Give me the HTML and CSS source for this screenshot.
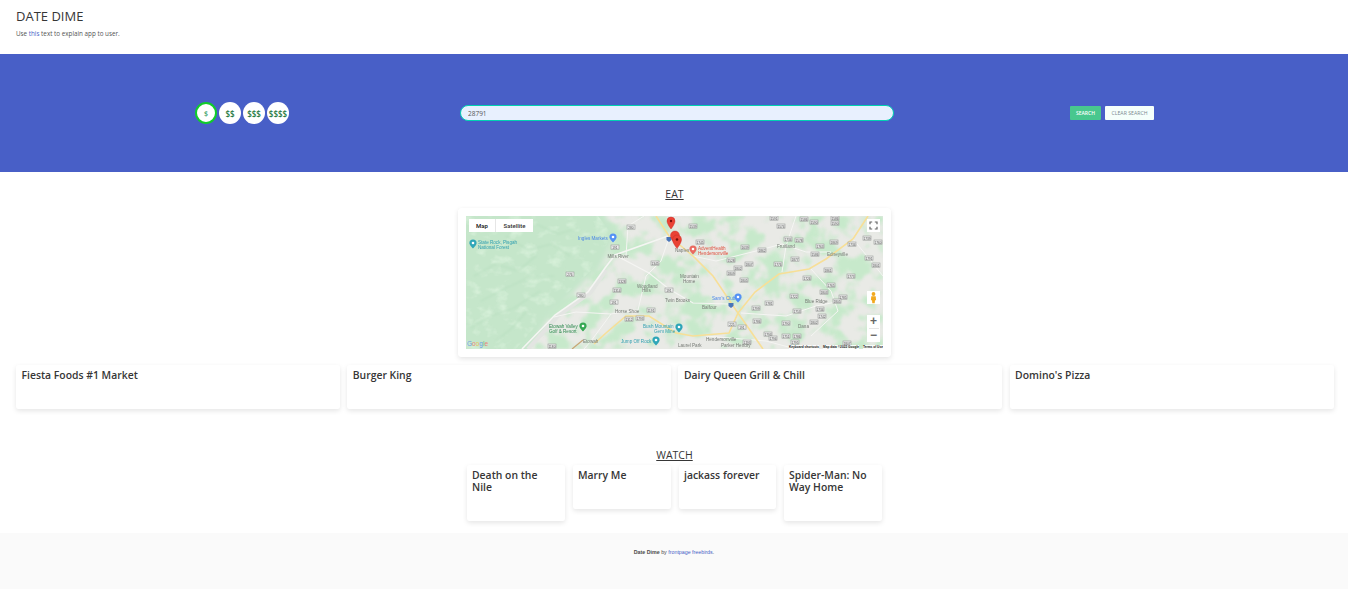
FILE: index.html
```html
<!DOCTYPE html>
<html lang="en">
<head>
  <meta charset="UTF-8">
  <title>Date Dime</title>
  <link rel="stylesheet" href="styles.css">
</head>
<body>

  <header class="top">
    <h1>DATE DIME</h1>
    <p>Use <a href="#">this</a> text to explain app to user.</p>
  </header>

  <section class="banner">
    <div class="prices">
      <button class="price active">$</button>
      <button class="price">$$</button>
      <button class="price">$$$</button>
      <button class="price">$$$$</button>
    </div>
    <input class="zip" type="text" value="28791">
    <div class="actions">
      <button class="btn-search">SEARCH</button>
      <button class="btn-clear">CLEAR SEARCH</button>
    </div>
  </section>

  <h2 class="section-title eat-title">EAT</h2>

  <div class="map-card">
    <div class="map">
      <svg class="map-base" viewBox="0 0 417 133" width="417" height="133">
        <defs>
          <filter id="mottle" x="0" y="0" width="100%" height="100%" color-interpolation-filters="sRGB">
            <feTurbulence type="fractalNoise" baseFrequency=".05" numOctaves="3" seed="11"/>
            <feColorMatrix values="0 0 0 0 .78  0 0 0 0 .915  0 0 0 0 .795  6 0 0 0 -2.700"/>
            <feGaussianBlur stdDeviation=".8"/>
          </filter>
          <filter id="terrain" x="0" y="0" width="100%" height="100%" color-interpolation-filters="sRGB">
            <feTurbulence type="fractalNoise" baseFrequency=".07 .1" numOctaves="3" seed="4"/>
            <feColorMatrix values="0 0 0 0 .84  0 0 0 0 .94  0 0 0 0 .85  3 0 0 0 -1.500"/>
            <feGaussianBlur stdDeviation=".6"/>
            <feComposite in2="SourceAlpha" operator="in"/>
          </filter>
          <filter id="wide" x="-20%" y="-20%" width="140%" height="140%"><feGaussianBlur stdDeviation="2.500"/></filter>
          <filter id="ridge"><feGaussianBlur stdDeviation="1"/></filter>
          <filter id="lens" x="0" y="0" width="100%" height="100%"><feGaussianBlur stdDeviation=".42"/></filter>
          <rect id="s" width="8" height="4.200" fill="#ecedec" stroke="#9a9c9a" stroke-width=".6"/>
        </defs>
        <g filter="url(#lens)">
        <rect width="417" height="133" fill="#e9eae6"/>
        <!-- patchy woodland over the valley -->
        <rect width="417" height="133" fill="#000" filter="url(#mottle)"/>
        <!-- forest -->
        <path fill="#c5e6ca" filter="url(#wide)" d="M-8-8H135L150 18 135 50 122 62 104 80 84 100 56 142H-8Z"/>
        <path fill="#000" filter="url(#terrain)" d="M0 0H132L146 18 130 50 100 78 78 100 50 133H0Z"/>
        <!-- forest ridges -->
        <g fill="none" stroke-linecap="round" filter="url(#ridge)">
          <g stroke="#b9dfc0" stroke-width="1.200">
            <path d="M8 60L30 48 52 55 70 40M15 85L40 72 62 62 88 60M5 112L25 100 48 92 74 75"/>
            <path d="M40 20L62 34 86 28 104 40M70 8L92 18 112 12M30 125L46 112 60 96"/>
          </g>
        </g>
        <!-- white roads -->
        <g fill="none" stroke="#f5f5f3">
          <path stroke="#e3e5e2" stroke-width="4" d="M62 133L92 100 125 76 140 54"/>
          <path stroke-width="1.600" d="M56 133L89 99 122 76 139 52 149 39 202 20"/>
          <path stroke-width="1.200" d="M149 39L183 57 203 73 227 87 262 88"/>
          <path stroke-width="1" d="M88 101L110 96 145 98 172 94M145 98L125 125 118 133"/>
          <path stroke-width="1" d="M172 94L180 60 195 45 203 22M160 40L162 10 178 0"/>
          <path stroke-width="1" d="M275 97L320 100 350 90 375 85M240 120L300 125 330 133"/>
          <path stroke-width="1" d="M227 40L250 45 290 35 316 28 340 36 365 36M316 56L320 30 330 0"/>
          <path stroke-width="1" d="M345 53L365 75 372 95 345 120M387 23L405 45 417 60"/>
        </g>
        <!-- main roads -->
        <g fill="none" stroke="#f7df97" stroke-width="1.600">
          <path d="M402 0L387 23 360 43 343 53 313 58 289 76 272 97 297 133"/>
          <path d="M190 0L203 20 227 40 247 60 272 97 263 117 227 120 210 117 183 100 160 100 140 117 128 128"/>
          <path stroke="#c7a674" stroke-width="1.200" d="M106 133L117 124"/>
        </g>
        <!-- route shields -->
        <g>
          <use href="#s" x="161" y="9"/><use href="#s" x="145" y="29"/><use href="#s" x="185" y="45"/><use href="#s" x="100" y="56"/><use href="#s" x="111" y="77"/>
          <use href="#s" x="152" y="63"/><use href="#s" x="147" y="72"/><use href="#s" x="144" y="84"/><use href="#s" x="181" y="92"/><use href="#s" x="159" y="101"/>
          <use href="#s" x="170" y="100"/><use href="#s" x="82" y="128"/><use href="#s" x="223" y="8"/><use href="#s" x="304" y="0"/><use href="#s" x="311" y="8"/>
          <use href="#s" x="334" y="1"/><use href="#s" x="344" y="4"/><use href="#s" x="365" y="0"/><use href="#s" x="365" y="5"/><use href="#s" x="318" y="21"/>
          <use href="#s" x="329" y="22"/><use href="#s" x="364" y="24"/><use href="#s" x="350" y="28"/><use href="#s" x="345" y="36"/><use href="#s" x="275" y="29"/>
          <use href="#s" x="292" y="32"/><use href="#s" x="230" y="24"/><use href="#s" x="261" y="42"/><use href="#s" x="268" y="50"/><use href="#s" x="279" y="46"/>
          <use href="#s" x="308" y="46"/><use href="#s" x="325" y="41"/><use href="#s" x="358" y="52"/><use href="#s" x="337" y="60"/><use href="#s" x="381" y="58"/>
          <use href="#s" x="261" y="55"/><use href="#s" x="274" y="62"/><use href="#s" x="361" y="67"/><use href="#s" x="354" y="74"/><use href="#s" x="324" y="78"/>
          <use href="#s" x="373" y="79"/><use href="#s" x="367" y="83"/><use href="#s" x="299" y="85"/><use href="#s" x="286" y="90"/><use href="#s" x="327" y="93"/>
          <use href="#s" x="350" y="91"/><use href="#s" x="352" y="98"/><use href="#s" x="287" y="103"/><use href="#s" x="316" y="105"/><use href="#s" x="344" y="104"/>
          <use href="#s" x="262" y="106"/><use href="#s" x="272" y="109"/><use href="#s" x="298" y="116"/><use href="#s" x="303" y="120"/><use href="#s" x="316" y="118"/>
          <use href="#s" x="327" y="118"/><use href="#s" x="325" y="124"/><use href="#s" x="277" y="124"/><use href="#s" x="377" y="125"/><use href="#s" x="397" y="20"/>
          <use href="#s" x="408" y="24"/><use href="#s" x="382" y="26"/><use href="#s" x="399" y="40"/><use href="#s" x="406" y="47"/><use href="#s" x="199" y="72"/>
        </g>
        <g class="route">
          <text x="165" y="12.500">280</text><text x="149" y="32.500">191</text><text x="189" y="48.500">1345</text><text x="104" y="59.500">276</text><text x="115" y="80.500">280</text>
          <text x="156" y="66.500">1328</text><text x="151" y="75.500">1314</text><text x="148" y="87.500">191</text><text x="185" y="95.500">1191</text><text x="163" y="104.500">1312</text>
          <text x="174" y="103.500">1793</text><text x="86" y="131.500">1180</text><text x="227" y="11.500">1539</text><text x="308" y="3.500">1591</text><text x="315" y="11.500">1574</text>
          <text x="338" y="4.500">1586</text><text x="348" y="7.500">1590</text><text x="369" y="3.500">1586</text><text x="369" y="8.500">1590</text><text x="322" y="24.500">1734</text>
          <text x="333" y="25.500">1578</text><text x="368" y="27.500">1869</text><text x="354" y="31.500">1763</text><text x="349" y="39.500">1586</text><text x="279" y="32.500">1639</text>
          <text x="296" y="35.500">1862</text><text x="234" y="27.500">1745</text><text x="265" y="45.500">1528</text><text x="272" y="53.500">1802</text><text x="283" y="49.500">1807</text>
          <text x="312" y="49.500">1776</text><text x="329" y="44.500">1877</text><text x="362" y="55.500">1861</text><text x="341" y="63.500">1726</text><text x="385" y="61.500">1773</text>
          <text x="265" y="58.500">1809</text><text x="278" y="65.500">1805</text><text x="365" y="70.500">1765</text><text x="358" y="77.500">1803</text><text x="328" y="81.500">1722</text>
          <text x="377" y="82.500">1785</text><text x="371" y="86.500">1805</text><text x="303" y="88.500">1781</text><text x="290" y="93.500">1799</text><text x="331" y="96.500">1753</text>
          <text x="354" y="94.500">1734</text><text x="356" y="101.500">1742</text><text x="291" y="106.500">1786</text><text x="320" y="108.500">1790</text><text x="348" y="107.500">1802</text>
          <text x="266" y="109.500">225</text><text x="276" y="112.500">191</text><text x="302" y="119.500">1793</text><text x="307" y="123.500">1794</text><text x="320" y="121.500">1751</text>
          <text x="331" y="121.500">1786</text><text x="329" y="127.500">1795</text><text x="281" y="127.500">1793</text><text x="381" y="128.500">1807</text><text x="401" y="23.500">1739</text>
          <text x="412" y="27.500">1760</text><text x="386" y="29.500">1734</text><text x="403" y="43.500">1791</text><text x="410" y="50.500">1801</text><text x="203" y="75.500">191</text>
        </g>
        <!-- place labels -->
        <g class="place">
          <text x="141.500" y="41.500">Mills River</text>
          <text x="171" y="71.500">Woodland</text><text x="176" y="76">Hills</text>
          <text x="149" y="96.500">Horse Shoe</text>
          <text x="117" y="126.500">Etowah</text>
          <text x="311" y="31.500">Fruitland</text>
          <text x="361" y="39.500">Edneyville</text>
          <text x="339" y="87">Blue Ridge</text>
          <text x="332" y="112">Dana</text>
          <text x="240" y="124.500">Hendersonville</text>
          <text x="212" y="130.500">Laurel Park</text>
          <text x="255" y="131">Parker Hendry</text>
          <text x="236" y="92.500">Balfour</text>
          <text x="214" y="62">Mountain</text><text x="217" y="66.500">Home</text>
          <text x="209" y="36">Naples</text>
          <text x="199" y="85.500">Twin Brooks</text>
        </g>
        <g class="poi">
          <text class="teal" x="12" y="27.500">State Rock, Pisgah</text>
          <text class="teal" x="12" y="32.500">National Forest</text>
          <text class="blue" x="112" y="23.500">Ingles Markets</text>
          <text class="blue" x="246" y="83.500">Sam's Club</text>
          <text class="green" x="83" y="111.500">Etowah Valley</text>
          <text class="green" x="83" y="116.500">Golf &amp; Resort</text>
          <text class="teal" x="177" y="111.500">Bush Mountain</text>
          <text class="teal" x="188" y="116.500">Gem Mine</text>
          <text class="teal" x="155" y="127">Jump Off Rock</text>
          <text class="red" x="232" y="33.500">AdventHealth</text>
          <text class="red" x="232" y="38.500">Hendersonville</text>
        </g>
        <!-- poi markers -->
        <path fill="#2fa6b8" d="M7 23.500a3.600 3.600 0 0 1 3.600 3.600c0 2.400-3.600 5.400-3.600 5.400s-3.600-3-3.600-5.400A3.600 3.600 0 0 1 7 23.500Z"/>
        <path fill="#5491f5" d="M147 17.500a3.600 3.600 0 0 1 3.600 3.600c0 2.400-3.600 5.400-3.600 5.400s-3.600-3-3.600-5.400A3.600 3.600 0 0 1 147 17.500Z"/>
        <path fill="#5491f5" d="M272 77.500a3.600 3.600 0 0 1 3.600 3.600c0 2.400-3.600 5.400-3.600 5.400s-3.600-3-3.600-5.400A3.600 3.600 0 0 1 272 77.500Z"/>
        <path fill="#34a853" d="M117 106.500a3.600 3.600 0 0 1 3.600 3.600c0 2.400-3.600 5.400-3.600 5.400s-3.600-3-3.600-5.400A3.600 3.600 0 0 1 117 106.500Z"/>
        <path fill="#2fa6b8" d="M190 120.500a3.600 3.600 0 0 1 3.600 3.600c0 2.400-3.600 5.400-3.600 5.400s-3.600-3-3.600-5.400A3.600 3.600 0 0 1 190 120.500Z"/>
        <path fill="#2fa6b8" d="M213 107.500a3.600 3.600 0 0 1 3.600 3.600c0 2.400-3.600 5.400-3.600 5.400s-3.600-3-3.600-5.400A3.600 3.600 0 0 1 213 107.500Z"/>
        <path fill="#ea6a60" d="M227 29.500a3.600 3.600 0 0 1 3.600 3.600c0 2.400-3.600 5.400-3.600 5.400s-3.600-3-3.600-5.400A3.600 3.600 0 0 1 227 29.500Z"/>
        <g fill="#fff">
          <circle cx="7" cy="27" r="1.300"/><circle cx="147" cy="21" r="1.300"/><circle cx="272" cy="81" r="1.300"/>
          <circle cx="117" cy="110" r="1.300"/><circle cx="190" cy="124" r="1.300"/><circle cx="213" cy="111" r="1.300"/><circle cx="227" cy="33" r="1.300"/>
        </g>
        <!-- interstate shields -->
        <path fill="#4a74b8" d="M200.500 21H205.500V24L203 26 200.500 24Z"/>
        <path fill="#4a74b8" d="M262.500 87H267.500V90L265 92 262.500 90Z"/>
        <!-- search result pins -->
        <g fill="#ea4335" stroke="#c5221f" stroke-width=".4">
          <path d="M205 1a4 4 0 0 1 4 4c0 3-4 8-4 8s-4-5-4-8a4 4 0 0 1 4-4Z"/>
          <path d="M209 15a4.500 4.500 0 0 1 4.500 4.500c0 3.500-4.500 8-4.500 8s-4.500-4.500-4.500-8A4.500 4.500 0 0 1 209 15Z"/>
          <path d="M211 19a4.500 4.500 0 0 1 4.500 4.500c0 3.500-4.500 9-4.500 9s-4.500-5.500-4.500-9A4.500 4.500 0 0 1 211 19Z"/>
        </g>
        <circle cx="211" cy="23.500" r="1.300" fill="#7a0f0a"/>
        <circle cx="205" cy="5" r="1.200" fill="#7a0f0a"/>
        </g>
      </svg>

      <div class="map-type">
        <span class="type-btn type-map">Map</span>
        <span class="type-btn type-sat">Satellite</span>
      </div>
      <div class="map-ctrl fullscreen">
        <svg viewBox="0 0 13 13" width="13" height="13"><path fill="none" stroke="#666" stroke-width="1.200" d="M3 5.200V3H5.200M7.800 3H10V5.200M10 7.800V10H7.800M5.200 10H3V7.800"/></svg>
      </div>
      <div class="map-ctrl pegman">
        <svg viewBox="0 0 13 13" width="13" height="13"><g fill="#f2a91e"><circle cx="6.500" cy="3" r="1.900"/><path d="M4.300 5.200h4.400l.4 4H8L7.700 12.200H5.300L5 9.200H3.900Z"/></g></svg>
      </div>
      <div class="map-ctrl zoom">
        <span class="zoom-btn">+</span>
        <span class="zoom-line"></span>
        <span class="zoom-btn">&minus;</span>
      </div>
      <span class="google"><b class="g1">G</b><b class="g2">o</b><b class="g3">o</b><b class="g1">g</b><b class="g4">l</b><b class="g2">e</b></span>
      <div class="attrib">
        <span>Keyboard shortcuts</span><span>Map data ©2022 Google</span><span>Terms of Use</span>
      </div>
    </div>
  </div>

  <div class="places">
    <div class="card"><h3>Fiesta Foods #1 Market</h3></div>
    <div class="card"><h3>Burger King</h3></div>
    <div class="card"><h3>Dairy Queen Grill &amp; Chill</h3></div>
    <div class="card"><h3>Domino's Pizza</h3></div>
  </div>

  <h2 class="section-title watch-title">WATCH</h2>

  <div class="movies">
    <div class="card"><h3>Death on the Nile</h3></div>
    <div class="card"><h3>Marry Me</h3></div>
    <div class="card"><h3>jackass forever</h3></div>
    <div class="card"><h3>Spider-Man: No Way Home</h3></div>
  </div>

  <footer class="foot">
    <p><strong>Date Dime</strong> by <a href="#">frontpage freebirds</a>.</p>
  </footer>

</body>
</html>
```

FILE: styles.css
```css
body {
  margin: 0;
  font-family: "Open Sans", sans-serif;
  color: #363636;
  background: #fff;
}

a {
  color: #485fc7;
  text-decoration: none;
}

.top {
  height: 54px;
  padding: 8px 16px 0;
  box-sizing: border-box;
}

.top h1 {
  margin: 0;
  font-size: 13px;
  font-weight: 400;
  line-height: 16px;
  color: #363636;
}

.top p {
  margin: 5px 0 0;
  font-size: 6.300px;
  line-height: 10px;
  color: #555;
}

.banner {
  height: 118px;
  padding-left: 195px;
  background: #485fc7;
  display: grid;
  grid-template-columns: 265px 610px auto;
  align-items: center;
}

.prices {
  display: flex;
  gap: 2px;
}

.price {
  width: 22px;
  height: 22px;
  padding: 0;
  border: 0;
  border-radius: 50%;
  background: #fff;
  color: #257942;
  font-family: "Open Sans", sans-serif;
  font-size: 8px;
  font-weight: 600;
  white-space: nowrap;
}

.price.active {
  border: 2px solid #10cc2a;
  font-size: 7px;
  font-weight: 600;
  color: #48a36f;
}

.zip {
  width: 434px;
  height: 16px;
  box-sizing: border-box;
  padding: 0 7px;
  border: 1px solid #00d1b2;
  border-radius: 8px;
  background: #e8f0fe;
  font-family: "Open Sans", sans-serif;
  font-size: 6.500px;
  color: #555;
}

.actions {
  display: flex;
  gap: 4px;
}

.actions button {
  height: 14px;
  padding: 0;
  border: 0;
  border-radius: 1px;
  font-family: "Open Sans", sans-serif;
  font-size: 5px;
}

.btn-search {
  width: 31px;
  background: #48c78e;
  color: #fff;
  font-weight: 600;
}

.actions .btn-clear {
  width: 49px;
  background: #f5fffb;
  color: #7a8a90;
  font-size: 5.200px;
}

.section-title {
  margin: 0;
  padding-left: 1px;
  font-size: 10.500px;
  font-weight: 400;
  line-height: 14px;
  text-align: center;
  text-decoration: underline;
  color: #363636;
}

.eat-title {
  padding-top: 15px;
}

.map-card {
  width: 417px;
  margin: 7px 0 0 458px;
  padding: 8px;
  border-radius: 3px;
  box-shadow: 0 2px 5px rgba(10, 10, 10, 0.1), 0 0 1px rgba(10, 10, 10, 0.04);
  background: #fff;
}

.map {
  position: relative;
  width: 417px;
  height: 133px;
  overflow: hidden;
}

.map-base {
  display: block;
}

.place text, .poi text {
  font-family: "Liberation Sans", sans-serif;
  font-size: 4.600px;
}

.place text {
  fill: #777b76;
}

.route text {
  font-family: "Liberation Sans", sans-serif;
  font-size: 3.200px;
  text-anchor: middle;
  fill: #555;
}

.poi .teal { fill: #2f9fb0; }
.poi .blue { fill: #4a86e8; }
.poi .green { fill: #2f8a50; }
.poi .red { fill: #e0503f; }

.map-type {
  position: absolute;
  left: 3px;
  top: 3px;
  width: 64px;
  height: 13px;
  display: flex;
  background: #fff;
  font-family: Roboto, sans-serif;
  font-size: 6px;
  font-weight: 500;
  line-height: 13px;
  text-align: center;
  color: #333;
}

.type-btn {
  display: block;
}

.type-map {
  width: 26px;
  color: #111;
  border-right: 1px solid #e6e6e6;
}

.type-sat {
  flex: 1;
}

.map-ctrl {
  position: absolute;
  left: 401px;
  width: 13px;
  background: #fff;
}

.map-ctrl svg {
  display: block;
}

.fullscreen {
  top: 3px;
  height: 13px;
}

.pegman {
  top: 75px;
  height: 13px;
}

.zoom {
  top: 99px;
  height: 27px;
  display: flex;
  flex-direction: column;
  align-items: center;
}

.zoom-btn {
  height: 13px;
  font-family: "Liberation Sans", sans-serif;
  font-size: 12px;
  font-weight: 700;
  line-height: 13px;
  color: #666;
}

.zoom-line {
  width: 10px;
  height: 1px;
  background: #e6e6e6;
}

.google {
  position: absolute;
  left: 1px;
  bottom: 1px;
  font-family: "Liberation Sans", sans-serif;
  font-size: 6.500px;
  line-height: 8px;
}

.google b {
  font-weight: 400;
}

.g1 { color: #6f9be8; }
.g2 { color: #e9837a; }
.g3 { color: #e8c45c; }
.g4 { color: #71b98a; }

.attrib {
  position: absolute;
  right: 0;
  bottom: 0;
  width: 94px;
  height: 4px;
  display: flex;
  justify-content: space-between;
  font-family: "Liberation Sans", sans-serif;
  font-size: 3.200px;
  font-weight: 700;
  line-height: 4px;
  color: #111;
  white-space: nowrap;
}

.attrib span {
  background: rgba(255, 255, 255, 0.85);
}

.card {
  box-sizing: border-box;
  padding: 4px 5.500px 0;
  border-radius: 2px;
  background: #fff;
  box-shadow: 0 2px 5px rgba(10, 10, 10, 0.1), 0 0 1px rgba(10, 10, 10, 0.03);
}

.card h3 {
  margin: 0;
  font-size: 10.400px;
  font-weight: 600;
  line-height: 12px;
  color: #363636;
}

.places {
  margin: 8px 14.500px 0 16px;
  display: grid;
  grid-template-columns: repeat(4, 1fr);
  column-gap: 7.330px;
}

.places .card {
  height: 44px;
}

.watch-title {
  margin-top: 39px;
}

.movies {
  width: 415px;
  margin: 3px auto 0;
  display: flex;
  align-items: flex-start;
  gap: 8px;
}

.movies .card {
  flex: 0 0 98px;
  height: 44px;
}

.movies .card:nth-child(1),
.movies .card:nth-child(4) {
  height: 56px;
}

.movies .card:nth-child(3) {
  flex-basis: 97px;
}

.foot {
  height: 56px;
  margin-top: 12px;
  padding-top: 16px;
  box-sizing: border-box;
  background: #fafafa;
  text-align: center;
  font-family: "Liberation Sans", sans-serif;
  font-size: 5.300px;
  color: #4a4a4a;
}

.foot p {
  margin: 0;
  line-height: 7px;
}
```
